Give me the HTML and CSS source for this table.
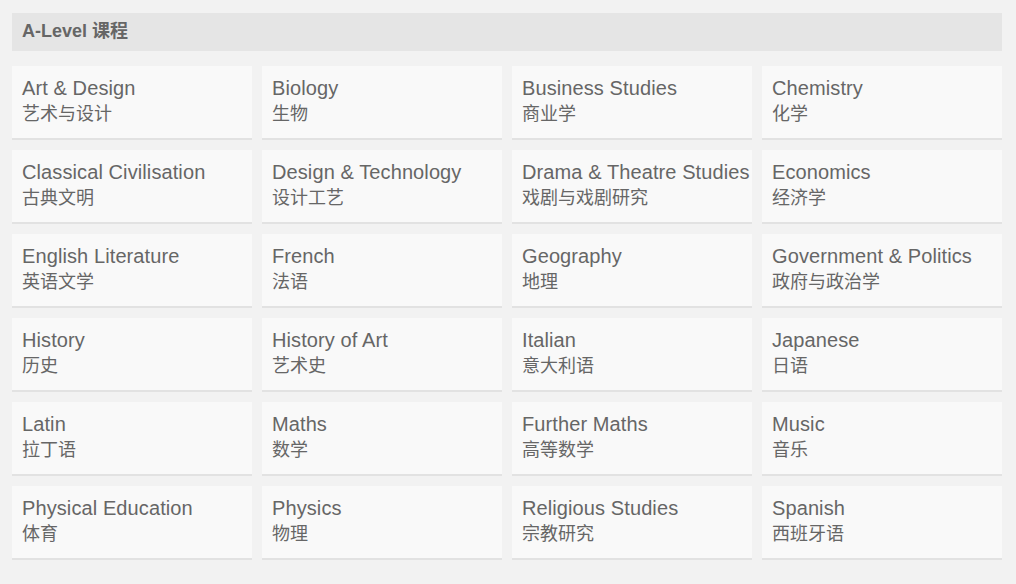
FILE: index.html
```html
<!DOCTYPE html>
<html lang="zh-CN">
<head>
    <meta charset="UTF-8" />
    <meta name="viewport" content="width=device-width, initial-scale=1.0" />
    <title>A-Level 课程</title>
    <link rel="stylesheet" href="styles.css">
</head>
<body>
    <!-- Liste des matières -->
    <div class="page">
        <h2 class="section-title">A-Level 课程</h2>

        <div class="course-grid">
            <div class="course-card"><span class="en">Art &amp; Design</span><span class="zh">艺术与设计</span></div>
            <div class="course-card"><span class="en">Biology</span><span class="zh">生物</span></div>
            <div class="course-card"><span class="en">Business Studies</span><span class="zh">商业学</span></div>
            <div class="course-card"><span class="en">Chemistry</span><span class="zh">化学</span></div>

            <div class="course-card"><span class="en">Classical Civilisation</span><span class="zh">古典文明</span></div>
            <div class="course-card"><span class="en">Design &amp; Technology</span><span class="zh">设计工艺</span></div>
            <div class="course-card"><span class="en">Drama &amp; Theatre Studies</span><span class="zh">戏剧与戏剧研究</span></div>
            <div class="course-card"><span class="en">Economics</span><span class="zh">经济学</span></div>

            <div class="course-card"><span class="en">English Literature</span><span class="zh">英语文学</span></div>
            <div class="course-card"><span class="en">French</span><span class="zh">法语</span></div>
            <div class="course-card"><span class="en">Geography</span><span class="zh">地理</span></div>
            <div class="course-card"><span class="en">Government &amp; Politics</span><span class="zh">政府与政治学</span></div>

            <div class="course-card"><span class="en">History</span><span class="zh">历史</span></div>
            <div class="course-card"><span class="en">History of Art</span><span class="zh">艺术史</span></div>
            <div class="course-card"><span class="en">Italian</span><span class="zh">意大利语</span></div>
            <div class="course-card"><span class="en">Japanese</span><span class="zh">日语</span></div>

            <div class="course-card"><span class="en">Latin</span><span class="zh">拉丁语</span></div>
            <div class="course-card"><span class="en">Maths</span><span class="zh">数学</span></div>
            <div class="course-card"><span class="en">Further Maths</span><span class="zh">高等数学</span></div>
            <div class="course-card"><span class="en">Music</span><span class="zh">音乐</span></div>

            <div class="course-card"><span class="en">Physical Education</span><span class="zh">体育</span></div>
            <div class="course-card"><span class="en">Physics</span><span class="zh">物理</span></div>
            <div class="course-card"><span class="en">Religious Studies</span><span class="zh">宗教研究</span></div>
            <div class="course-card"><span class="en">Spanish</span><span class="zh">西班牙语</span></div>
        </div>
    </div>
</body>
</html>
```

FILE: styles.css
```css
:root {
    --page-bg: #f2f2f2;
    --header-bg: #e5e5e5;
    --card-bg: #f9f9f9;
    --card-border: #e2e2e2;
    --text-color: #666666;
}

body {
    margin: 0;
    background: var(--page-bg);
    font-family: 'Liberation Sans', 'Noto Sans CJK SC', sans-serif;
    color: var(--text-color);
}

.page {
    padding: 13px 14px 0 12px;
}

.section-title {
    margin: 0;
    height: 38px;
    line-height: 36px;
    padding: 0 10px;
    background: var(--header-bg);
    font-size: 18px;
    font-weight: bold;
    color: var(--text-color);
}

.course-grid {
    display: grid;
    grid-template-columns: repeat(4, 240px);
    column-gap: 10px;
    row-gap: 10px;
    margin-top: 15px;
}

.course-card {
    display: flex;
    flex-direction: column;
    height: 74px;
    box-sizing: border-box;
    padding: 10px 10px 0;
    background: var(--card-bg);
    border-bottom: 2px solid var(--card-border);
    white-space: nowrap;
}

.course-card .en {
    font-size: 20px;
    line-height: 24px;
    letter-spacing: 0.1px;
}

.course-card .zh {
    font-size: 18px;
    line-height: 28px;
}
```
